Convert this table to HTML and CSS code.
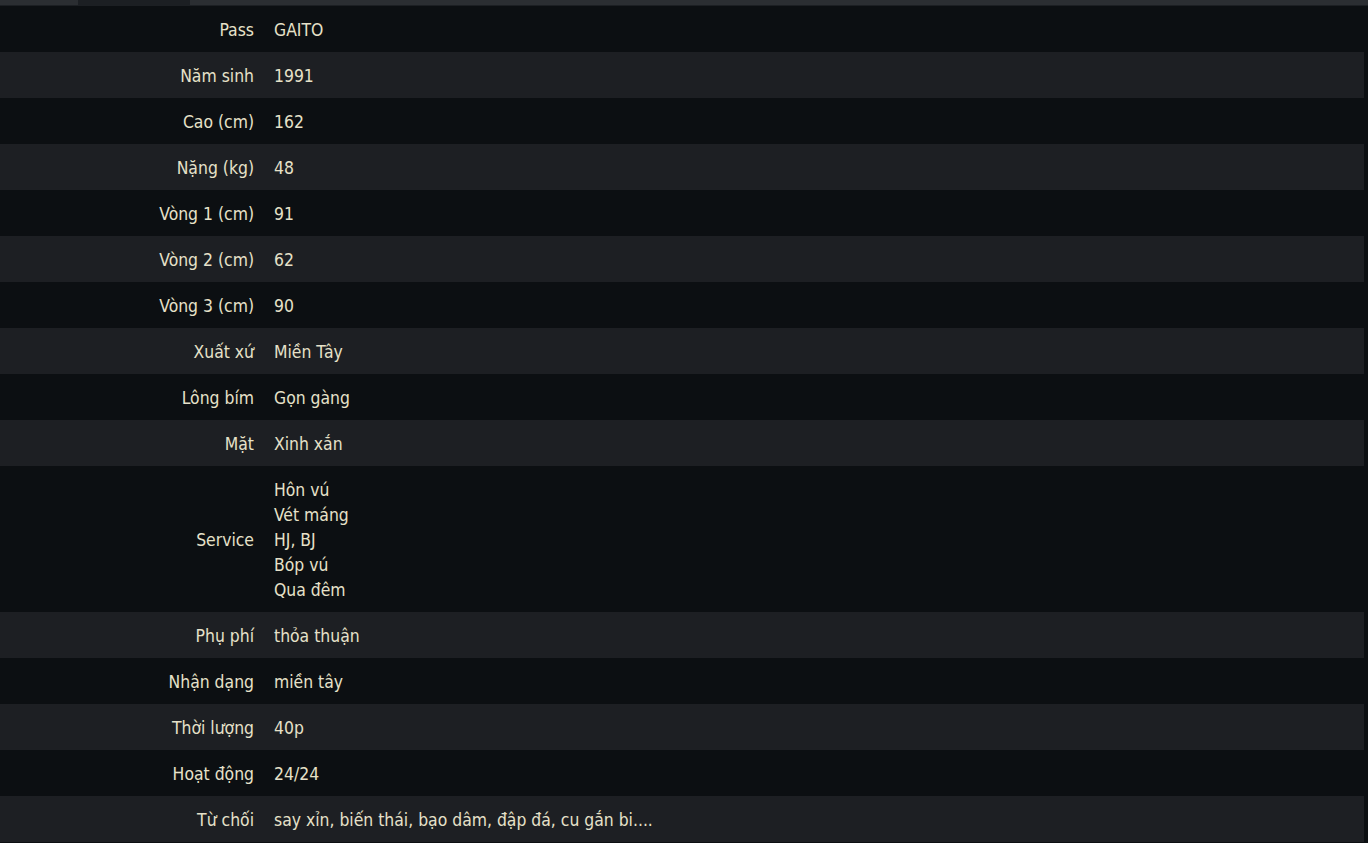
FILE: index.html
```html
<!DOCTYPE html>
<html lang="vi">
<head>
    <meta charset="UTF-8">
    <meta name="viewport" content="width=device-width, initial-scale=1.0">
    <title>Thông tin</title>
    <link rel="stylesheet" href="styles.css">
</head>
<body>
    <div class="tabbar">
        <span class="tab active"></span>
    </div>

    <table class="info-table">
        <tr><th>Pass</th><td>GAITO</td></tr>
        <tr><th>Năm sinh</th><td>1991</td></tr>
        <tr><th>Cao (cm)</th><td>162</td></tr>
        <tr><th>Nặng (kg)</th><td>48</td></tr>
        <tr><th>Vòng 1 (cm)</th><td>91</td></tr>
        <tr><th>Vòng 2 (cm)</th><td>62</td></tr>
        <tr><th>Vòng 3 (cm)</th><td>90</td></tr>
        <tr><th>Xuất xứ</th><td>Miền Tây</td></tr>
        <tr><th>Lông bím</th><td>Gọn gàng</td></tr>
        <tr><th>Mặt</th><td>Xinh xắn</td></tr>
        <tr>
            <th>Service</th>
            <td>Hôn vú<br>Vét máng<br>HJ, BJ<br>Bóp vú<br>Qua đêm</td>
        </tr>
        <tr><th>Phụ phí</th><td>thỏa thuận</td></tr>
        <tr><th>Nhận dạng</th><td>miền tây</td></tr>
        <tr><th>Thời lượng</th><td>40p</td></tr>
        <tr><th>Hoạt động</th><td>24/24</td></tr>
        <tr><th>Từ chối</th><td>say xỉn, biến thái, bạo dâm, đập đá, cu gắn bi....</td></tr>
    </table>
</body>
</html>
```

FILE: styles.css
```css
body {
    font-family: 'DejaVu Sans Condensed', 'DejaVu Sans', Tahoma, sans-serif;
    background-color: #0c0f12;
    color: #e6e1c9;
    margin: 0;
    padding: 0;
    font-size: 17.4px;
}
.tabbar {
    height: 5px;
    background-color: #2b2e32;
    border-bottom: 1px solid #1c1f23;
    padding-left: 78px;
    display: flex;
}
.tab {
    width: 112px;
    height: 5px;
}
.tab.active {
    background-color: #1c1f23;
}
.info-table {
    width: 1364px;
    border-collapse: collapse;
    border-spacing: 0;
}
.info-table tr:nth-child(even) {
    background-color: #1d1f23;
}
.info-table th,
.info-table td {
    padding: 11.5px 10px 9.5px;
    line-height: 25px;
    vertical-align: middle;
}
.info-table th {
    width: 244px;
    text-align: right;
    font-weight: normal;
}
.info-table td {
    text-align: left;
}
```
